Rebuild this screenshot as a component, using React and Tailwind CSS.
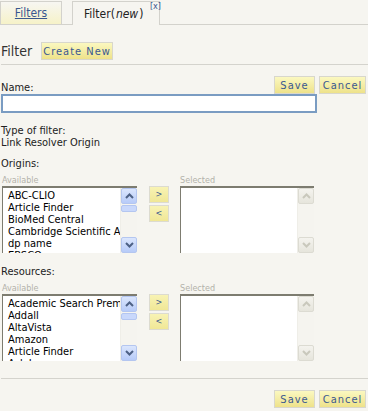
import React from 'react';

const origins = ['ABC-CLIO', 'Article Finder', 'BioMed Central', 'Cambridge Scientific Abstracts', 'dp name', 'EBSCO'];
const resources = ['Academic Search Premier', 'Addall', 'AltaVista', 'Amazon', 'Article Finder', 'Ask Jeeves'];

const Btn = ({ children, className = '' }) => (
    <button className={`h-[18px] border border-[#d8d7cc] bg-gradient-to-b from-[#fbf8c0] to-[#eee28a] text-[#3a5890] text-[11px] tracking-[1px] leading-none ${className}`}>
        {children}
    </button>
);

// little arrow for the fake scrollbar buttons
const Arrow = ({ up, disabled }) => (
    <svg width="9" height="6" viewBox="0 0 9 6">
        <path d={up ? 'M1 5 L4.5 1.5 L8 5' : 'M1 1 L4.5 4.5 L8 1'} fill="none" stroke={disabled ? '#c9c8bc' : '#4d6185'} strokeWidth="2" />
    </svg>
);

const ListBox = ({ items, disabled }) => {
    const btn = disabled
        ? 'border-[#dcdbd2] bg-gradient-to-b from-[#f4f3ee] to-[#e6e5dc]'
        : 'border-[#b4c6f0] bg-gradient-to-b from-[#dbe6fd] to-[#b7cbf8]';
    return (
        <div className="flex h-[67px] border-t-2 border-l border-[#7d7c70] bg-white">
            <div className="flex-1 overflow-hidden pl-[5px] pt-[2px] text-[11px] leading-[12px] text-black whitespace-nowrap font-['DejaVu_Sans',sans-serif]">
                {items.map((it) => (
                    <div key={it} className="h-[12px]">{it}</div>
                ))}
            </div>
            <div className="w-[17px] flex flex-col bg-[#f5f4ef] border-l border-[#efeee8]">
                <div className={`h-[16px] border rounded-[2px] flex items-center justify-center ${btn}`}>
                    <Arrow up disabled={disabled} />
                </div>
                {!disabled && <div className="h-[7px] mt-[1px] border border-[#b4c6f0] rounded-[2px] bg-[#c9d8fb]" />}
                <div className="flex-1" />
                <div className={`h-[16px] border rounded-[2px] flex items-center justify-center ${btn}`}>
                    <Arrow disabled={disabled} />
                </div>
            </div>
        </div>
    );
};

const Picker = ({ label, items }) => (
    <div>
        <div className="h-[12px] leading-[12px]">{label}</div>
        <div className="flex mt-[5px]">
            <div className="w-[135px] ml-[1px]">
                <div className="text-[9px] leading-[10px] text-[#b3b2aa] h-[11px]">Available</div>
                <ListBox items={items} />
            </div>
            <div className="w-[20px] ml-[12px] mt-[11px] flex flex-col gap-[2px]">
                <button className="h-[17px] border border-[#dcdbd0] bg-gradient-to-b from-[#f8f3b4] to-[#f0e796] text-[#3a5890] text-[9px] leading-none">&gt;</button>
                <button className="h-[17px] border border-[#dcdbd0] bg-gradient-to-b from-[#f8f3b4] to-[#f0e796] text-[#3a5890] text-[9px] leading-none">&lt;</button>
            </div>
            <div className="w-[134px] ml-[11px]">
                <div className="text-[9px] leading-[10px] text-[#b3b2aa] h-[11px]">Selected</div>
                <ListBox items={[]} disabled />
            </div>
        </div>
    </div>
);

export default function App() {
    return (
        <div className="w-[368px] h-[411px] overflow-hidden bg-[#f6f5f0] text-[11px] text-[#222] font-['DejaVu_Sans',Verdana,sans-serif] [font-stretch:condensed]">
            {/* tabs */}
            <div className="flex items-end h-[25px] pt-[1px]">
                <div className="w-[62px] h-[24px] border border-[#d3d2cc] bg-gradient-to-b from-[#f7f6f2] to-[#f6f2c8] flex items-center justify-center">
                    <a className="text-[12px] text-[#3a5890] underline">Filters</a>
                </div>
                <div className="w-[10px] h-[24px] border-b border-[#d3d2cc]" />
                <div className="relative w-[88px] h-[24px] border border-b-0 border-[#d3d2cc] flex items-center pl-[11px] text-[12px] text-[#222]">
                    Filter(<i className="px-[1px]">new</i>)
                    <span className="absolute right-[-2px] top-[-1px] text-[9px] leading-[10px] text-[#3a5890]">[x]</span>
                </div>
                <div className="flex-1 h-[24px] border-b border-[#d3d2cc]" />
            </div>

            {/* heading */}
            <div className="mt-[17px] ml-[1px] flex items-center gap-[9px] h-[18px]">
                <span className="text-[14px] text-[#333]">Filter</span>
                <Btn className="w-[72px]">Create New</Btn>
            </div>
            <div className="mt-[4px] ml-[1px] border-b border-[#d4d3cd]" />

            {/* name */}
            <div className="mt-[11px] flex justify-end gap-[4px] pr-[2px] h-[18px] relative">
                <span className="absolute left-[1px] bottom-[0px] leading-[12px]">Name:</span>
                <Btn className="w-[41px]">Save</Btn>
                <Btn className="w-[47px]">Cancel</Btn>
            </div>
            <div className="ml-[1px] w-[316px] h-[19px] border-2 border-[#7a9cc2] bg-white" />

            <div className="mt-[12px] ml-[1px] leading-[12px]">
                <div>Type of filter:</div>
                <div>Link Resolver Origin</div>
            </div>

            <div className="mt-[9px] ml-[1px]">
                <Picker label="Origins:" items={origins} />
            </div>
            <div className="mt-[13px] ml-[1px]">
                <Picker label="Resources:" items={resources} />
            </div>

            <div className="mt-[17px] ml-[1px] border-b border-[#d4d3cd]" />
            <div className="mt-[11px] flex justify-end gap-[4px] pr-[2px]">
                <Btn className="w-[41px]">Save</Btn>
                <Btn className="w-[47px]">Cancel</Btn>
            </div>
        </div>
    );
}
